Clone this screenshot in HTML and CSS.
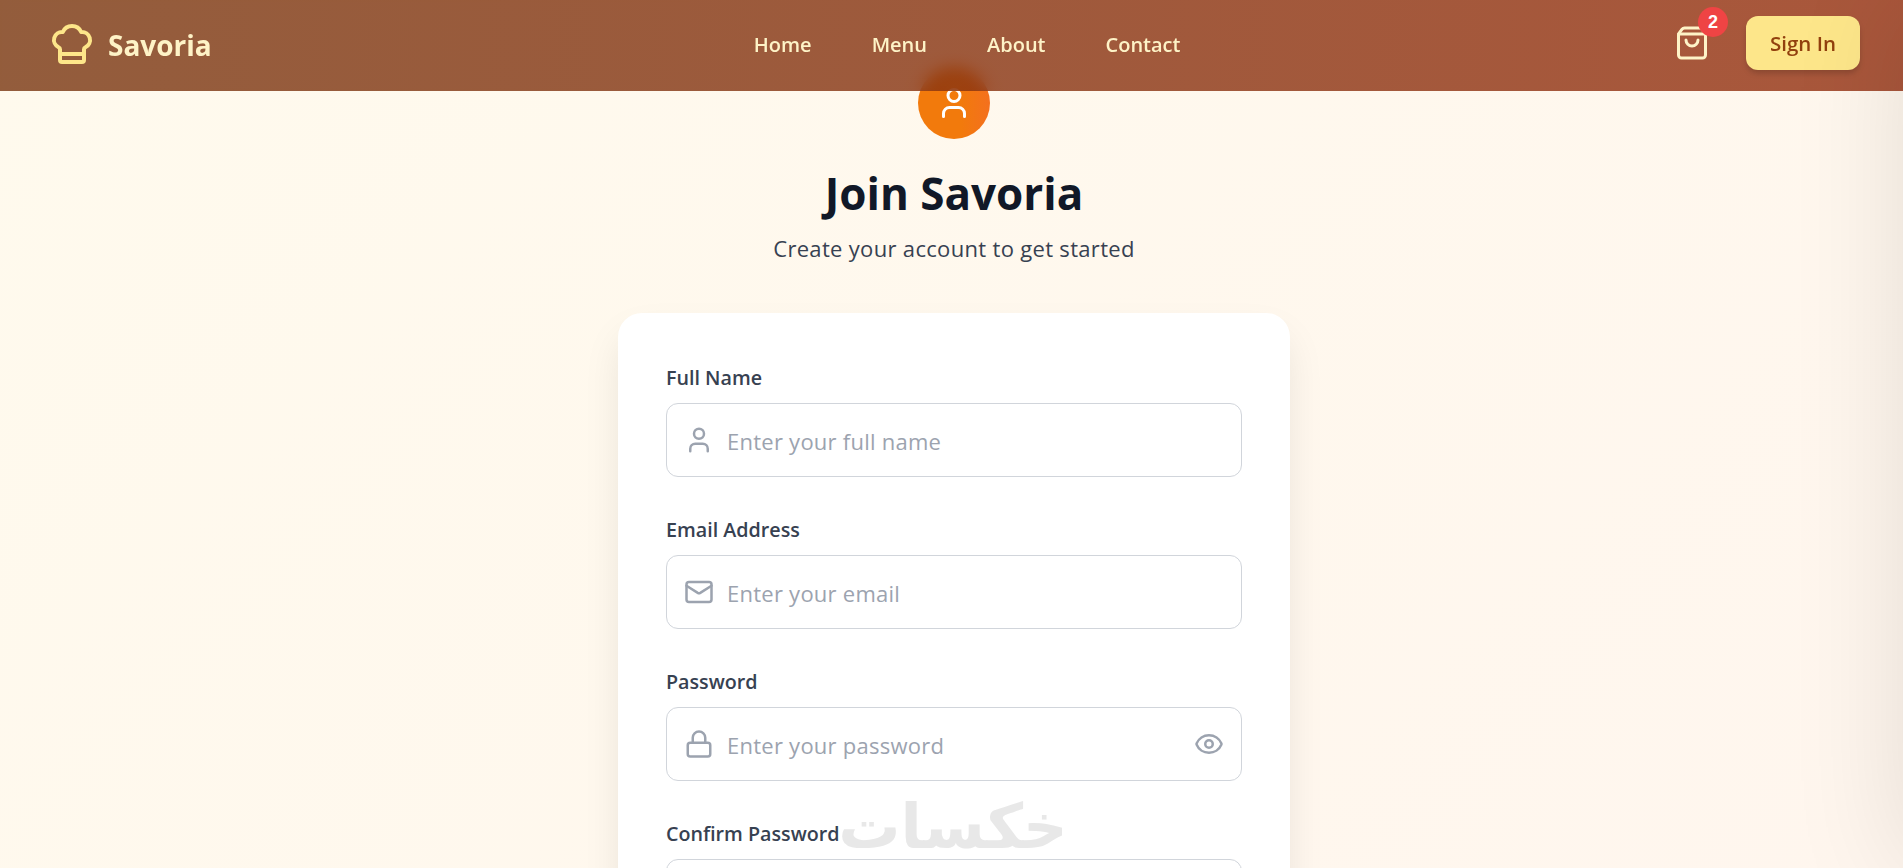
FILE: index.html
```html
<!DOCTYPE html>
<html lang="en">
<head>
    <meta charset="UTF-8">
    <meta name="viewport" content="width=device-width, initial-scale=1.0">
    <title>Savoria - Sign Up</title>
    <link rel="stylesheet" href="styles.css">
</head>
<body>
    <nav class="navbar">
        <a class="logo" href="#">
            <svg class="logo-icon" viewBox="0 0 24 24">
                <path d="M17 21a1 1 0 0 0 1-1v-5.35c0-.457.316-.844.727-1.041a4 4 0 0 0-2.134-7.589 5 5 0 0 0-9.186 0 4 4 0 0 0-2.134 7.588c.411.198.727.585.727 1.041V20a1 1 0 0 0 1 1Z"/>
                <path d="M6 17h12"/>
            </svg>
            <span class="logo-text">Savoria</span>
        </a>
        <div class="nav-links">
            <a href="#">Home</a>
            <a href="#">Menu</a>
            <a href="#">About</a>
            <a href="#">Contact</a>
        </div>
        <div class="nav-actions">
            <button class="cart-button" type="button">
                <svg class="cart-icon" viewBox="0 0 24 24">
                    <path d="M16 10a4 4 0 0 1-8 0"/>
                    <path d="M3.103 6.034h17.794"/>
                    <path d="M3.4 5.467a2 2 0 0 0-.4 1.2V20a2 2 0 0 0 2 2h14a2 2 0 0 0 2-2V6.667a2 2 0 0 0-.4-1.2l-2-2.667A2 2 0 0 0 17 2H7a2 2 0 0 0-1.6.8z"/>
                </svg>
                <span class="cart-badge">2</span>
            </button>
            <button class="signin-button" type="button">Sign In</button>
        </div>
    </nav>

    <aside class="cart-drawer"></aside>

    <main class="page">
        <div class="avatar">
            <svg class="avatar-icon" viewBox="0 0 24 24">
                <path d="M19 21v-2a4 4 0 0 0-4-4H9a4 4 0 0 0-4 4v2"/>
                <circle cx="12" cy="7" r="4"/>
            </svg>
        </div>
        <h1 class="title">Join Savoria</h1>
        <p class="subtitle">Create your account to get started</p>

        <form class="card">
            <div class="field">
                <label for="name">Full Name</label>
                <div class="input-wrap">
                    <svg class="input-icon" viewBox="0 0 24 24">
                        <path d="M19 21v-2a4 4 0 0 0-4-4H9a4 4 0 0 0-4 4v2"/>
                        <circle cx="12" cy="7" r="4"/>
                    </svg>
                    <input id="name" type="text" placeholder="Enter your full name">
                </div>
            </div>
            <div class="field">
                <label for="email">Email Address</label>
                <div class="input-wrap">
                    <svg class="input-icon" viewBox="0 0 24 24">
                        <path d="m22 7-8.991 5.727a2 2 0 0 1-2.009 0L2 7"/>
                        <rect x="2" y="4" width="20" height="16" rx="2"/>
                    </svg>
                    <input id="email" type="email" placeholder="Enter your email">
                </div>
            </div>
            <div class="field">
                <label for="password">Password</label>
                <div class="input-wrap">
                    <svg class="input-icon" viewBox="0 0 24 24">
                        <rect x="3" y="11" width="18" height="11" rx="2"/>
                        <path d="M7 11V7a5 5 0 0 1 10 0v4"/>
                    </svg>
                    <input id="password" type="password" placeholder="Enter your password">
                    <svg class="input-icon eye-icon" viewBox="0 0 24 24">
                        <path d="M2.062 12.348a1 1 0 0 1 0-.696 10.75 10.75 0 0 1 19.876 0 1 1 0 0 1 0 .696 10.75 10.75 0 0 1-19.876 0"/>
                        <circle cx="12" cy="12" r="3"/>
                    </svg>
                </div>
            </div>
            <div class="field">
                <label for="confirm">Confirm Password</label>
                <div class="input-wrap">
                    <svg class="input-icon" viewBox="0 0 24 24">
                        <rect x="3" y="11" width="18" height="11" rx="2"/>
                        <path d="M7 11V7a5 5 0 0 1 10 0v4"/>
                    </svg>
                    <input id="confirm" type="password" placeholder="Confirm your password">
                </div>
            </div>
        </form>
    </main>

    <div class="watermark" dir="rtl">خكسات</div>
</body>
</html>
```

FILE: styles.css
```css
* {
    box-sizing: border-box;
}
html, body {
    height: 100%;
    margin: 0;
    overflow: hidden;
}
body {
    font-family: "Open Sans", "Noto Sans", Arial, sans-serif;
    background: linear-gradient(135deg, #fffaed, #fff6ee);
}
svg {
    fill: none;
    stroke: currentColor;
    stroke-width: 2;
    stroke-linecap: round;
    stroke-linejoin: round;
}

/* navbar */
.navbar {
    position: fixed;
    top: 0;
    left: 0;
    z-index: 10;
    width: 1908px;
    height: 91px;
    padding: 0 48px 5px;
    display: flex;
    align-items: center;
    background: linear-gradient(90deg, rgba(120, 53, 15, 0.8), rgba(148, 46, 14, 0.8));
    backdrop-filter: blur(8px);
}
.logo {
    display: flex;
    align-items: center;
    gap: 12px;
    text-decoration: none;
}
.logo-icon {
    width: 48px;
    height: 48px;
    margin-top: 2px;
    color: #fde68a;
}
.logo-text {
    padding-top: 3px;
    font-size: 28px;
    font-weight: 700;
    color: #fef3c7;
}
.nav-links {
    display: flex;
    gap: 60px;
    margin-left: 542px;
    padding-top: 3px;
}
.nav-links a {
    font-size: 20px;
    font-weight: 600;
    color: #fef3c7;
    text-decoration: none;
}
.nav-actions {
    display: flex;
    align-items: center;
    gap: 36px;
    margin-left: auto;
}
.cart-button {
    position: relative;
    display: flex;
    padding: 0;
    border: none;
    background: none;
    color: #fef3c7;
}
.cart-icon {
    width: 36px;
    height: 36px;
}
.cart-badge {
    position: absolute;
    top: -18px;
    right: -18px;
    width: 30px;
    height: 30px;
    border-radius: 50%;
    background-color: #ef4444;
    color: white;
    font-size: 18px;
    font-weight: 700;
    line-height: 30px;
    text-align: center;
}
.signin-button {
    width: 114px;
    height: 54px;
    border: none;
    border-radius: 12px;
    background-color: #fde68a;
    color: #92400e;
    font-family: inherit;
    font-size: 20.5px;
    font-weight: 600;
    box-shadow: 0 4px 6px -1px rgba(0, 0, 0, 0.2);
}

/* shadow of the closed cart panel */
.cart-drawer {
    position: fixed;
    top: 0;
    left: 100%;
    z-index: 20;
    width: 400px;
    height: 100%;
    box-shadow: 0 0 110px rgba(0, 0, 0, 0.11);
}

/* form */
.page {
    width: 1908px;
    padding-top: 67px;
    display: flex;
    flex-direction: column;
    align-items: center;
}
.avatar {
    width: 72px;
    height: 72px;
    border-radius: 50%;
    display: flex;
    align-items: center;
    justify-content: center;
    background: linear-gradient(90deg, #f27a0c 60%, #f4701e);
    color: white;
}
.avatar-icon {
    width: 36px;
    height: 36px;
}
.title {
    margin: 26px 0 0;
    font-size: 44px;
    line-height: 56px;
    font-weight: 700;
    color: #111827;
}
.subtitle {
    margin: 12px 0 0;
    font-size: 22px;
    letter-spacing: 0.32px;
    line-height: 30px;
    color: #374151;
}
.card {
    width: 672px;
    margin-top: 50px;
    padding: 48px;
    background-color: white;
    border-radius: 24px;
    box-shadow: 0 20px 40px -5px rgba(0, 0, 0, 0.1);
}
.field {
    margin-bottom: 36px;
}
.field label {
    display: block;
    margin-bottom: 8px;
    font-size: 19.7px;
    line-height: 34px;
    font-weight: 600;
    color: #374151;
}
.input-wrap {
    position: relative;
    display: flex;
    align-items: center;
    height: 74px;
    padding: 0 17px;
    border: 1px solid #d1d5db;
    border-radius: 12px;
}
.input-icon {
    width: 30px;
    height: 30px;
    flex-shrink: 0;
    color: #9ca3af;
}
.field input {
    flex: 1;
    min-width: 0;
    margin-left: 13px;
    padding: 1px 0 0;
    border: none;
    outline: none;
    font-family: inherit;
    font-size: 22px;
    letter-spacing: 0.25px;
    color: #111827;
}
.field input::placeholder {
    color: #9ca3af;
}

.watermark {
    position: fixed;
    left: 838px;
    top: 782px;
    z-index: 30;
    width: 230px;
    font-family: "DejaVu Sans", sans-serif;
    font-size: 62px;
    font-weight: 700;
    line-height: 90px;
    color: #e8e8e8;
    text-align: center;
    white-space: nowrap;
}
```
